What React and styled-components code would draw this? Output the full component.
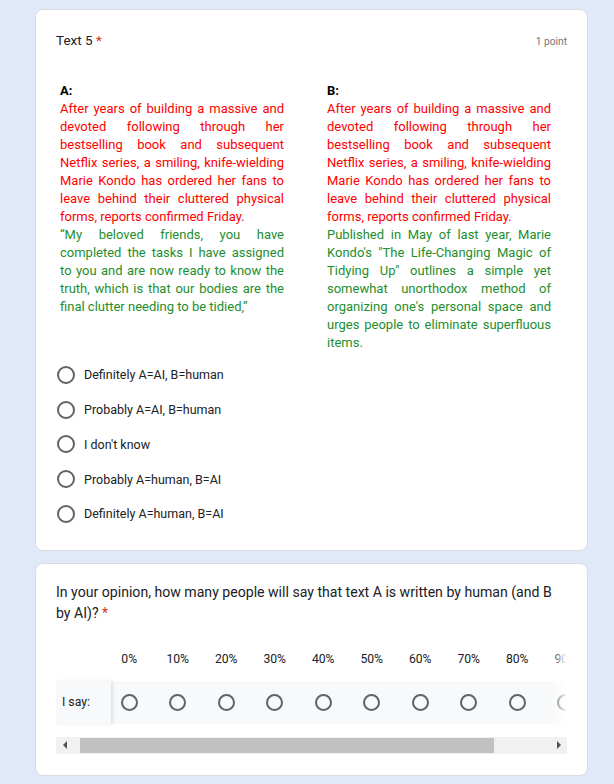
import React from 'react'
import styled, { createGlobalStyle } from 'styled-components'

const GlobalStyle = createGlobalStyle`
    body {
        margin: 0;
        background: #e1e8f9;
        font-family: Roboto, "Liberation Sans", Arial, sans-serif;
        color: #202124;
    }
`

const textA = {
    red: 'After years of building a massive and devoted following through her bestselling book and subsequent Netflix series, a smiling, knife-wielding Marie Kondo has ordered her fans to leave behind their cluttered physical forms, reports confirmed Friday.',
    green: '“My beloved friends, you have completed the tasks I have assigned to you and are now ready to know the truth, which is that our bodies are the final clutter needing to be tidied,”',
}

const textB = {
    red: textA.red,
    green: 'Published in May of last year, Marie Kondo\'s "The Life-Changing Magic of Tidying Up" outlines a simple yet somewhat unorthodox method of organizing one\'s personal space and urges people to eliminate superfluous items.',
}

const options = [
    'Definitely A=AI, B=human',
    'Probably A=AI, B=human',
    "I don't know",
    'Probably A=human, B=AI',
    'Definitely A=human, B=AI',
]

const scale = ['0%', '10%', '20%', '30%', '40%', '50%', '60%', '70%', '80%', '90%', '100%']


function App() {
    return <Page>
        <GlobalStyle />
        <Card $pad="20px 20px 19px 20px">
            <TitleRow>
                <Title>Text 5 <Required>*</Required></Title>
                <Points>1 point</Points>
            </TitleRow>
            <Passages>
                <Passage label="A:" text={textA} />
                <Passage label="B:" text={textB} />
            </Passages>
            <Options>
                {options.map(o => <Option key={o}>
                    <Radio />
                    <span>{o}</span>
                </Option>)}
            </Options>
        </Card>
        <Card $pad="18px 20px 21px 20px">
            <Question>
                In your opinion, how many people will say that text A is written by human (and B by AI)? <Required>*</Required>
            </Question>
            <Matrix>
                <MatrixRow>
                    <RowLabel $header />
                    <Cells>
                        <CellStrip>
                            {scale.map(s => <HeaderCell key={s}>{s}</HeaderCell>)}
                        </CellStrip>
                        <Fade />
                    </Cells>
                </MatrixRow>
                <MatrixRow $body>
                    <RowLabel>I say:</RowLabel>
                    <Cells>
                        <CellStrip>
                            {scale.map(s => <RadioCell key={s}><Radio $small /></RadioCell>)}
                        </CellStrip>
                        <Fade />
                    </Cells>
                </MatrixRow>
            </Matrix>
            <Scrollbar>
                <ArrowButton><Arrow /></ArrowButton>
                <ThumbTrack><Thumb /></ThumbTrack>
                <ArrowButton><Arrow $right /></ArrowButton>
            </Scrollbar>
        </Card>
    </Page>
}

function Passage({ label, text }) {
    return <div>
        <PassageLabel>{label}</PassageLabel>
        <PassageText $color="#ff0000">{text.red}</PassageText>
        <PassageText $color="#1e8e2e">{text.green}</PassageText>
    </div>
}

const Page = styled.div`
    padding: 9px 26px 8px 35px;
    display: flex;
    flex-direction: column;
    gap: 12px;
`

const Card = styled.section`
    width: 553px;
    box-sizing: border-box;
    background: #fff;
    border: 1px solid #dadce0;
    border-radius: 8px;
    padding: ${props => props.$pad};
`

const TitleRow = styled.div`
    display: flex;
    justify-content: space-between;
    align-items: baseline;
    line-height: 20px;
`

const Title = styled.div`
    font-size: 13.5px;
    color: #202124;
`

const Required = styled.span`
    color: #d93025;
`

const Points = styled.div`
    font-size: 10.2px;
    color: #70757a;
`

const Passages = styled.div`
    display: grid;
    grid-template-columns: 224px 224px;
    column-gap: 43px;
    padding-left: 4px;
    margin-top: 30px;
`

const PassageLabel = styled.div`
    font-size: 13px;
    line-height: 18px;
    font-weight: bold;
    color: #000;
`

const PassageText = styled.div`
    font-size: 13px;
    line-height: 18px;
    text-align: justify;
    color: ${props => props.$color};
`

const Options = styled.div`
    margin-top: 5.6px;
    display: flex;
    flex-direction: column;
`

const Option = styled.label`
    height: 34.75px;
    display: flex;
    align-items: center;
    gap: 9px;
    padding-left: 1px;
    font-size: 12.5px;
    color: #202124;
`

const Radio = styled.span`
    width: ${props => props.$small ? 17 : 18}px;
    height: ${props => props.$small ? 17 : 18}px;
    box-sizing: border-box;
    border: 2px solid #5f6368;
    border-radius: 50%;
    flex: none;
`

const Question = styled.div`
    font-size: 14.1px;
    line-height: 21px;
    color: #202124;
`

const Matrix = styled.div`
    margin-top: 24.5px;
    display: flex;
    flex-direction: column;
    gap: 12px;
`

const MatrixRow = styled.div`
    display: flex;
    height: ${props => props.$body ? 43 : 20}px;
    background: ${props => props.$body ? '#f8f9fa' : 'transparent'};
`

const RowLabel = styled.div`
    width: 55px;
    flex: none;
    box-sizing: border-box;
    padding-left: 6px;
    display: flex;
    align-items: center;
    font-size: 12.2px;
    color: #202124;
    position: relative;
    z-index: 1;
    background: ${props => props.$header ? '#fff' : '#f8f9fa'};
    box-shadow: ${props => props.$header ? 'none' : '2px 0 3px rgba(0, 0, 0, 0.1)'};
`

const Cells = styled.div`
    flex: 1;
    overflow: hidden;
    position: relative;
`

const CellStrip = styled.div`
    display: flex;
    height: 100%;
    margin-left: -6px;
`

const HeaderCell = styled.div`
    width: 48.5px;
    flex: none;
    display: flex;
    align-items: center;
    justify-content: center;
    font-size: 12.2px;
    color: #202124;
`

const RadioCell = styled.div`
    width: 48.5px;
    flex: none;
    display: flex;
    align-items: center;
    justify-content: center;
`

const Fade = styled.div`
    position: absolute;
    top: 0;
    right: 0;
    bottom: 0;
    width: 16px;
    background: linear-gradient(to right, rgba(255, 255, 255, 0), #fff);
`

const Scrollbar = styled.div`
    margin-top: 13px;
    height: 17px;
    display: flex;
    background: #f1f1f1;
`

const ArrowButton = styled.div`
    width: 17px;
    flex: none;
    display: flex;
    align-items: center;
    justify-content: center;
`

const Arrow = styled.span`
    width: 0;
    height: 0;
    border-top: 4px solid transparent;
    border-bottom: 4px solid transparent;
    ${props => props.$right
        ? 'border-left: 4px solid #505050;'
        : 'border-right: 4px solid #505050;'}
`

const ThumbTrack = styled.div`
    flex: 1;
    display: flex;
    align-items: center;
`

const Thumb = styled.div`
    margin-left: 7px;
    width: 414px;
    height: 15px;
    background: #c1c1c1;
`

export default App
